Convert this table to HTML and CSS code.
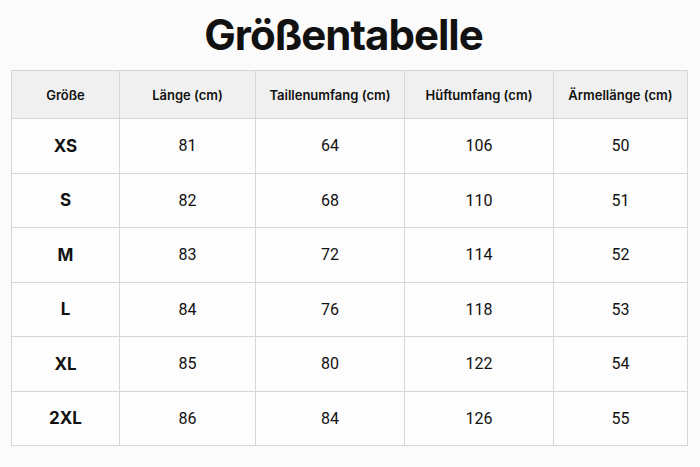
FILE: index.html
```html
<!DOCTYPE html>
<html lang="de">
<head>
<meta charset="utf-8">
<link rel="stylesheet" href="styles.css">
</head>
<body>
<main class="page">
  <h1 class="title">Größentabelle</h1>
  <table class="sizes">
    <colgroup>
      <col class="c1"><col class="c2"><col class="c3"><col class="c4"><col class="c5">
    </colgroup>
    <thead>
      <tr><th>Größe</th><th>Länge (cm)</th><th>Taillenumfang (cm)</th><th>Hüftumfang (cm)</th><th>Ärmellänge (cm)</th></tr>
    </thead>
    <tbody>
      <tr><td class="size">XS</td><td>81</td><td>64</td><td>106</td><td>50</td></tr>
      <tr><td class="size">S</td><td>82</td><td>68</td><td>110</td><td>51</td></tr>
      <tr><td class="size">M</td><td>83</td><td>72</td><td>114</td><td>52</td></tr>
      <tr><td class="size">L</td><td>84</td><td>76</td><td>118</td><td>53</td></tr>
      <tr><td class="size">XL</td><td>85</td><td>80</td><td>122</td><td>54</td></tr>
      <tr><td class="size">2XL</td><td>86</td><td>84</td><td>126</td><td>55</td></tr>
    </tbody>
  </table>
</main>
</body>
</html>
```
FILE: styles.css
```css
html, body {
  margin: 0;
  padding: 0;
  background: #fbfbfb;
}
.page {
  width: 700px;
  height: 467px;
  padding: 11px 12px 0 11px;
  box-sizing: border-box;
  font-family: Roboto, "Liberation Sans", sans-serif;
  color: #111;
}
.title {
  margin: 0 0 12px 0;
  height: 47px;
  font-family: Inter, "Liberation Sans", sans-serif;
  font-weight: 700;
  font-size: 42px;
  line-height: 47px;
  text-align: center;
  letter-spacing: -1px;
  padding-right: 12px;
}
.sizes {
  border-collapse: collapse;
  width: 677px;
  table-layout: fixed;
}
.c1 { width: 108px; }
.c2 { width: 136px; }
.c3 { width: 149px; }
.c4 { width: 149px; }
.c5 { width: 134px; }
.sizes th, .sizes td {
  border: 1px solid #d6d6d6;
  text-align: center;
  padding: 0;
}
.sizes th {
  height: 47px;
  background: #f0f0f0;
  font-family: Inter, "Liberation Sans", sans-serif;
  font-weight: 600;
  font-size: 13px;
}
.sizes td {
  height: 53.5px;
  font-size: 16px;
  background: #fdfdfd;
}
.sizes td.size {
  font-family: Inter, "Liberation Sans", sans-serif;
  font-weight: 700;
  font-size: 17px;
}
```
